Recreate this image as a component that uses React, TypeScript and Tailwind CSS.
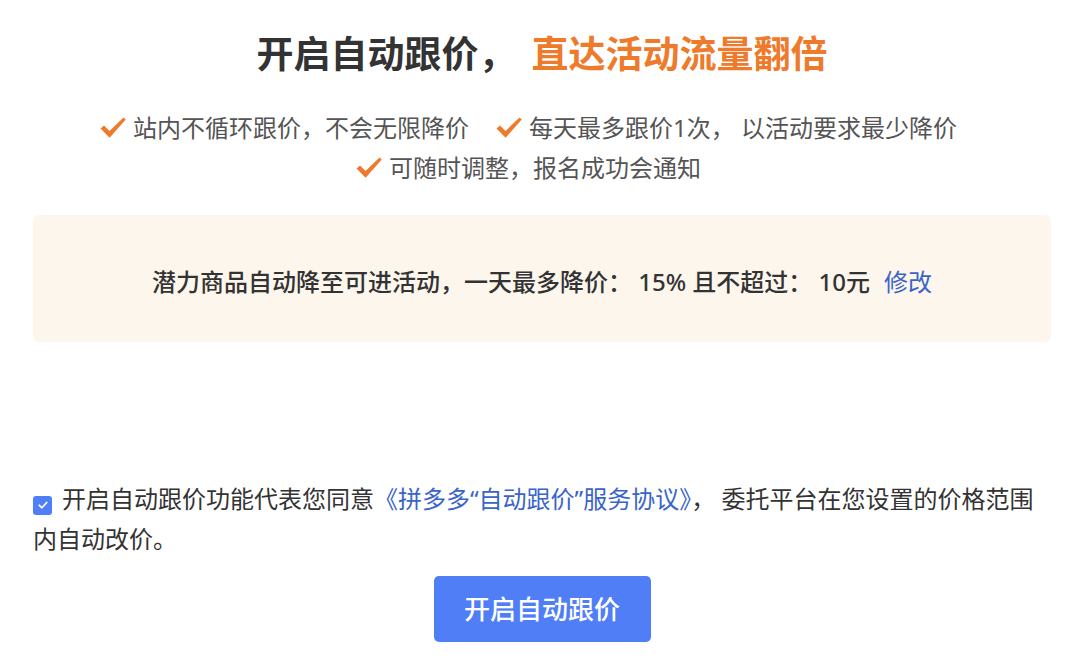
import React from 'react';

const FONT = "font-['Noto_Sans','Noto_Sans_CJK_SC',sans-serif]";

function Tick() {
  return (
    <svg width={26} height={22} viewBox="0 0 26 22" className="shrink-0">
      <path d="M0.5 11.5 L4 8.5 L9.5 14 L23.5 0.5 L25.8 2.6 L9.6 20.8 Z" fill="#ee7a2c" />
    </svg>
  );
}

const points = [
  '站内不循环跟价，不会无限降价',
  '每天最多跟价1次， 以活动要求最少降价',
  '可随时调整，报名成功会通知',
];

export default function App() {
  return (
    <div className={`${FONT} w-full h-[662px] bg-white pl-[33px] pr-[29px] overflow-hidden`}>
      {/* headline */}
      <h1 className="pt-[30px] text-center text-[37px] leading-[48px] font-bold text-[#333333]">
        开启自动跟价，
        <span className="ml-[16px] text-[#ee7a2c]">直达活动流量翻倍</span>
      </h1>

      {/* selling points */}
      <div className="mt-[30px] flex flex-wrap justify-center">
        {points.map((p) => (
          <div key={p} className="mr-[27px] flex items-center gap-[7px] h-[40px]">
            <Tick />
            <span className="text-[24px] leading-[40px] text-[#555555] whitespace-pre">{p}</span>
          </div>
        ))}
      </div>

      {/* rule panel */}
      <div className="mt-[27px] h-[127px] rounded-[6px] bg-[#fdf6ed] flex items-center justify-center pt-[6px]">
        <p className="text-[24px] font-medium text-[#333333] whitespace-pre">
          潜力商品自动降至可进活动，一天最多降价： 15% 且不超过： 10元
          <span className="ml-[14px] font-normal text-[#3a64c8]">修改</span>
        </p>
      </div>

      {/* agreement */}
      <p className="mt-[137px] text-[24px] leading-[40px] text-[#333333] whitespace-nowrap">
        <span className="inline-flex align-[-3px] mr-[10px] w-[19px] h-[19px] rounded-[3px] bg-[#4f7ef6] items-center justify-center">
          <svg width={12} height={12} viewBox="0 0 12 12">
            <path d="M2.2 6.2 L4.9 8.8 L9.8 3.4" stroke="white" strokeWidth={1.6} fill="none" strokeLinecap="round" strokeLinejoin="round" />
          </svg>
        </span>
        开启自动跟价功能代表您同意
        <span className="text-[#3a64c8]">《拼多多“自动跟价”服务协议》</span>
        ， 委托平台在您设置的价格范围
        <br />
        内自动改价。
      </p>

      <div className="mt-[17px] flex justify-center">
        <button className="w-[217px] h-[66px] rounded-[5px] bg-[#4f7ef6] text-white text-[26px] font-medium">
          开启自动跟价
        </button>
      </div>
    </div>
  );
}
